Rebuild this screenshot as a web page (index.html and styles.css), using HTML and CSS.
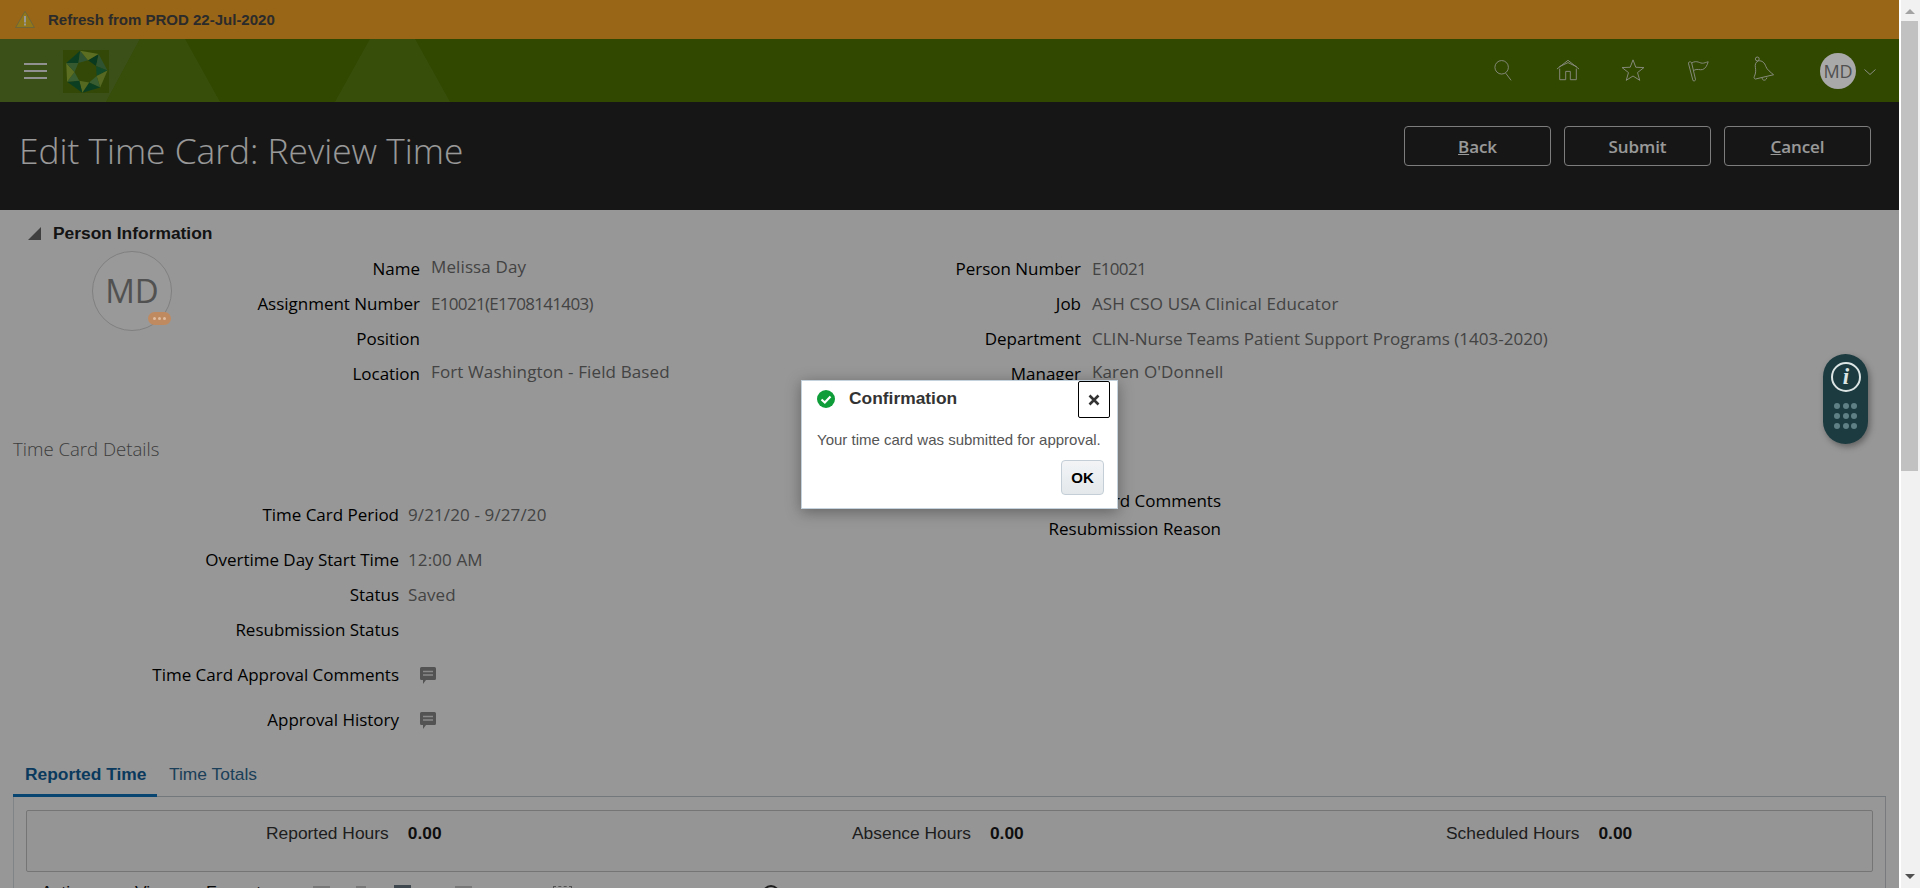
FILE: index.html
```html
<!DOCTYPE html>
<html lang="en">
<head>
<meta charset="utf-8">
<title>Edit Time Card: Review Time</title>
<link rel="stylesheet" href="styles.css">
</head>
<body>
<div class="app">
  <div class="banner">
    <svg class="warn" viewBox="0 0 20 18"><path d="M10 .8 19.400 17H.6Z" fill="#f5c82a" stroke="#b8a860"/><rect x="9" y="5.500" width="2" height="6.500" fill="#fff"/><rect x="9" y="13" width="2" height="2" fill="#fff"/></svg>
    <span class="banner-text">Refresh from PROD 22-Jul-2020</span>
  </div>
  <header class="nav">
    <svg class="nav-bg" viewBox="0 0 700 63" preserveAspectRatio="none"><polygon points="0,0 140,0 106,63 0,63" fill="#63862a"/><polygon points="140,0 185,0 220,63 106,63" fill="#5c8312"/><polygon points="370,0 415,0 450,63 335,63" fill="#5c8312"/></svg>
    <button class="burger"><i></i><i></i><i></i></button>
    <svg class="logo" viewBox="0 0 46 43">
      <rect width="46" height="43" fill="#55780a"/>
      <polygon points="25,10.200 33.100,16 35.600,4" fill="#0f5f33"/>
      <polygon points="35.600,4 44.500,20.400 33.100,16" fill="#4f8a50"/>
      <polygon points="33.100,16 33.600,26 44.500,20.400" fill="#1f7a45"/>
      <polygon points="44.500,20.400 37.200,37.600 33.600,26" fill="#8fae3a"/>
      <polygon points="33.600,26 26.100,32.600 37.200,37.600" fill="#5f9a50"/>
      <polygon points="37.200,37.600 19.300,42.700 26.100,32.600" fill="#14683a"/>
      <polygon points="26.100,32.600 16.300,30.800 19.300,42.700" fill="#8fb038"/>
      <polygon points="19.300,42.700 4.100,31.800 16.300,30.800" fill="#14683a"/>
      <polygon points="16.300,30.800 11.500,22.100 4.100,31.800" fill="#5f9a50"/>
      <polygon points="4.100,31.800 3.200,13.100 11.500,22.100" fill="#9ab83a"/>
      <polygon points="11.500,22.100 15.400,12.900 3.200,13.100" fill="#5a9450"/>
      <polygon points="3.200,13.100 17.200,.8 15.400,12.900" fill="#14683a"/>
      <polygon points="15.400,12.900 25,10.200 17.200,.8" fill="#4f8a50"/>
      <polygon points="17.200,.8 35.600,4 25,10.200" fill="#9ab83a"/>
    </svg>
    <div class="nav-icons">
      <svg class="nav-icon i-search" viewBox="0 0 20 24"><circle cx="8.500" cy="9" r="7.500"/><path d="M13 15.500 19 23.500"/></svg>
      <svg class="nav-icon i-home" viewBox="0 0 26 23"><path d="M1 10.500 13 1l12 9.500M4 10v12h6.500v-9h5v9H22V10M3.500 8 13 3.500 22.500 8"/></svg>
      <svg class="nav-icon i-star" viewBox="0 0 26 25"><path d="M13 1.500 16 9.500l8.800.4-6.900 5.400 2.400 8.400L13 19l-7.300 4.700 2.400-8.400L1.200 9.900 10 9.500Z"/></svg>
      <svg class="nav-icon i-flag" viewBox="0 0 25 25"><path d="M1.500 5 6.500 24c1.500.8 2.800 0 2.800-1L5 4.500c-1-1.500-3.500-.8-3.500.5ZM5 5c6-4 9 1 13 0 2.500-.5 4.500-1.500 5-1.500-1 4-3 7.500-6 8.500-3 1-6-1.500-9.800 1"/></svg>
      <svg class="nav-icon i-bell" viewBox="0 0 23 27"><circle cx="4.500" cy="3" r="2"/><path d="M5.500 5c4.500-.5 6.500 2 8 6 1 3 5 6 8 8.500L2.500 24C1 23.500.8 22.500 1.500 21c1.500-3 1.500-6 1-9-.5-3 0-5.500 3-7ZM9.500 23c.2 3 4.500 3 5-.5"/></svg>
    </div>
    <div class="user">MD</div>
    <svg class="chev" viewBox="0 0 12 6"><path d="M.5.500 6 5.500 11.500.5"/></svg>
  </header>
  <div class="page-head">
    <h1 class="page-title">Edit Time Card: Review Time</h1>
    <div class="actions">
      <button class="act"><u>B</u>ack</button>
      <button class="act">Submit</button>
      <button class="act"><u>C</u>ancel</button>
    </div>
  </div>
  <main class="content">
    <div class="disclosure"><span class="tri"></span><h2 class="sec-title">Person Information</h2></div>
    <section class="person">
      <div class="avatar">MD<span class="badge"><b></b><b></b><b></b></span></div>
      <div class="form form-a">
        <div class="row"><span class="lab">Name</span><span class="val up">Melissa Day</span></div>
        <div class="row"><span class="lab">Assignment Number</span><span class="val num">E10021(E1708141403)</span></div>
        <div class="row"><span class="lab">Position</span><span class="val"></span></div>
        <div class="row"><span class="lab">Location</span><span class="val up">Fort Washington - Field Based</span></div>
      </div>
      <div class="form form-b">
        <div class="row"><span class="lab">Person Number</span><span class="val num">E10021</span></div>
        <div class="row"><span class="lab">Job</span><span class="val">ASH CSO USA Clinical Educator</span></div>
        <div class="row"><span class="lab">Department</span><span class="val snug">CLIN-Nurse Teams Patient Support Programs (1403-2020)</span></div>
        <div class="row"><span class="lab">Manager</span><span class="val up">Karen O'Donnell</span></div>
      </div>
    </section>
    <h3 class="details-title">Time Card Details</h3>
    <section class="details">
      <div class="form form-c">
        <div class="row r-period"><span class="lab">Time Card Period</span><span class="val">9/21/20 - 9/27/20</span></div>
        <div class="row"><span class="lab">Overtime Day Start Time</span><span class="val">12:00 AM</span></div>
        <div class="row"><span class="lab">Status</span><span class="val">Saved</span></div>
        <div class="row r-res"><span class="lab">Resubmission Status</span><span class="val"></span></div>
        <div class="row r-cmt"><span class="lab">Time Card Approval Comments</span><span class="val"><svg class="cmt" viewBox="0 0 16 17"><path d="M1.500 0h13A1.500 1.500 0 0 1 16 1.500v10a1.500 1.500 0 0 1-1.500 1.500H6l-3 4v-4H1.500A1.500 1.500 0 0 1 0 11.500v-10A1.500 1.500 0 0 1 1.500 0Z" fill="#8a8a8a"/><path d="M3 4.500h10M3 8h10" stroke="#e6e6e6" stroke-width="1.500"/></svg></span></div>
        <div class="row r-cmt"><span class="lab">Approval History</span><span class="val"><svg class="cmt" viewBox="0 0 16 17"><path d="M1.500 0h13A1.500 1.500 0 0 1 16 1.500v10a1.500 1.500 0 0 1-1.500 1.500H6l-3 4v-4H1.500A1.500 1.500 0 0 1 0 11.500v-10A1.500 1.500 0 0 1 1.500 0Z" fill="#8a8a8a"/><path d="M3 4.500h10M3 8h10" stroke="#e6e6e6" stroke-width="1.500"/></svg></span></div>
      </div>
      <div class="form form-d">
        <div class="row"><span class="lab">Time Card Comments</span></div>
        <div class="row"><span class="lab">Resubmission Reason</span></div>
      </div>
    </section>
    <nav class="tabs">
      <a class="tab tab-on">Reported Time</a>
      <a class="tab">Time Totals</a>
    </nav>
    <section class="panel">
      <div class="totals">
        <div class="total"><span>Reported Hours</span><b>0.00</b></div>
        <div class="total"><span>Absence Hours</span><b>0.00</b></div>
        <div class="total"><span>Scheduled Hours</span><b>0.00</b></div>
      </div>
      <div class="toolbar">
        <span class="tool t-a">Actions</span>
        <span class="tool t-v">View</span>
        <span class="tool t-f">Format</span>
        <i class="tb-ico ic1"></i><i class="tb-ico ic2"></i><i class="tb-ico ic3"></i><i class="tb-ico ic4"></i><i class="tb-ico ic5"></i><i class="tb-ico ic6"></i><i class="tb-ico ic7"></i>
      </div>
    </section>
  </main>
  <div class="overlay"></div>
  <div class="dialog">
    <div class="dlg-head">
      <svg class="ok-ico" viewBox="0 0 18 18"><circle cx="9" cy="9" r="9" fill="#0f9d3a"/><path d="M4.500 9.500 7.800 12.500 13.500 6.500" fill="none" stroke="#fff" stroke-width="2.200"/></svg>
      <span class="dlg-title">Confirmation</span>
      <button class="dlg-close"><svg viewBox="0 0 12 12"><path d="M1.500 1.500 10.500 10.500M10.500 1.500 1.500 10.500" stroke="#333" stroke-width="2.600"/></svg></button>
    </div>
    <p class="dlg-msg">Your time card was submitted for approval.</p>
    <div class="dlg-foot"><button class="dlg-ok">OK</button></div>
  </div>
  <div class="widget">
    <span class="w-info">i</span>
    <div class="w-dots"><b></b><b></b><b></b><b></b><b></b><b></b><b></b><b></b><b></b></div>
  </div>
</div>
<aside class="scrollbar">
  <span class="arr-up"></span>
  <span class="thumb"></span>
  <span class="arr-down"></span>
</aside>
</body>
</html>
```

FILE: styles.css
```css
* { box-sizing: border-box; }
html, body { margin: 0; height: 888px; overflow: hidden; }
body { display: flex; background: #fff; font-family: "Liberation Sans", Arial, sans-serif; }
button { font: inherit; background: none; padding: 0; }
h1, h2, h3, p { margin: 0; font-weight: normal; }

.app { position: relative; flex: 1; min-width: 0; height: 888px; overflow: hidden; background: #fff; }
.overlay { position: absolute; inset: 0; background: rgba(0, 0, 0, .4); }

.banner { height: 39px; background: #ffa826; display: flex; align-items: center; padding-left: 15px; }
.warn { width: 20px; height: 19px; margin-right: 13px; }
.banner-text { font-size: 15px; font-weight: 700; color: #484848; }

.nav { position: relative; height: 63px; background: #507800; display: flex; align-items: center; }
.nav-bg { position: absolute; left: 0; top: 0; width: 700px; height: 63px; }
.burger { position: relative; width: 23px; height: 16px; margin-left: 24px; border: 0; display: flex; flex-direction: column; justify-content: space-between; }
.burger i { display: block; height: 2px; background: #f2f2f2; }
.logo { position: relative; width: 46px; height: 43px; margin: 1px 0 0 16px; }
.nav-icons { margin-left: auto; display: flex; align-items: center; margin-top: -2px; }
.nav-icon { fill: none; stroke: #e8ecd8; stroke-width: 1; display: block; }
.i-search { width: 18px; height: 22px; margin-right: 44px; }
.i-home { width: 24px; height: 22px; margin-right: 41px; }
.i-star { width: 24px; height: 24px; margin-right: 42px; }
.i-flag { width: 23px; height: 24px; margin-right: 43px; }
.i-bell { width: 22px; height: 26px; margin-right: 45px; margin-top: -1px; }
.user { position: relative; z-index: 1; width: 36px; height: 36px; border-radius: 50%; background: #a9a9a9; color: #505050; font: 18px/36px "Open Sans", sans-serif; text-align: center; }
.chev { width: 12px; height: 6px; margin: 3px 23px 0 8px; fill: none; stroke: #e8ecd8; }

.page-head { height: 108px; background: #252525; display: flex; align-items: flex-start; justify-content: space-between; padding-left: 19px; }
.page-title { font: 300 35.300px/1 "Open Sans", sans-serif; color: #fff; margin-top: 31px; }
.actions { display: flex; gap: 13px; margin: 24px 28px 0 0; }
.act { width: 147px; height: 40px; border: 1px solid #d0d0d0; border-radius: 4px; color: #fff; font: 600 17px "Open Sans", sans-serif; letter-spacing: -.1px; }

.content { height: 678px; color: #000; background: #fcfcfc; }
.disclosure { display: flex; align-items: center; height: 41px; padding: 5px 0 0 28px; }
.tri { width: 0; height: 0; border-style: solid; border-width: 0 0 13px 13px; border-color: transparent transparent #6a6a6a transparent; margin-right: 12px; }
.sec-title { font-size: 17.400px; font-weight: 700; color: #222; }

.person { display: flex; height: 189px; }
.form { font: 17px/1 "Open Sans", sans-serif; }
.row { display: flex; align-items: center; height: 35px; white-space: nowrap; }
.lab { color: #000; flex: none; text-align: right; letter-spacing: -.02px; }
.val { color: #707070; letter-spacing: .12px; }
.val.num { letter-spacing: -.68px; }
.val.snug { letter-spacing: .02px; }
.val.up { position: relative; top: -2px; }
.form-a { width: 650px; }
.form-a .lab { width: 248px; }
.form-a .val { margin-left: 11px; }
.form-b .lab { width: 259px; }
.form-b .val { margin-left: 11px; }

.avatar { position: relative; flex: none; width: 80px; height: 80px; margin-left: 92px; border: 1px solid #d5d5d5; border-radius: 50%; background: #fff; color: #888; font: 33px/78px "Open Sans", sans-serif; text-align: center; }
.badge { position: absolute; z-index: 1; left: 55px; top: 60px; width: 23px; height: 13px; border-radius: 7px; background: #c08a60; display: flex; align-items: center; justify-content: center; gap: 2px; }
.badge b { width: 3px; height: 3px; border-radius: 50%; background: #e0bda0; }

.details-title { font: 300 18.600px/1 "Open Sans", sans-serif; color: #666; margin-left: 13px; height: 25px; }
.details { display: flex; height: 290px; }
.form-c { width: 800px; padding-top: 32px; }
.form-c .lab { width: 399px; }
.form-c .val { margin-left: 9px; }
.r-period { margin-bottom: 10px; }
.r-res { margin-bottom: 5px; }
.form-c .r-cmt { height: 45px; }
.form-c .r-cmt .val { margin-left: 21px; display: flex; }
.cmt { width: 16px; height: 17px; margin-top: 1px; }
.form-d { width: 421px; padding-top: 21px; }
.form-d .row { justify-content: flex-end; height: 28px; }

.tabs { display: flex; margin: 0 13px; height: 42px; border-bottom: 1px solid #c0c8d0; font-size: 17.400px; padding-top: 9px; }
.tab { height: 32px; line-height: 21px; color: #2f6a94; padding-left: 12px; white-space: nowrap; }
.tab-on { width: 144px; height: 33px; font-weight: 700; color: #12619b; border-bottom: 3px solid #0f74bc; }

.panel { margin: 0 13px; padding: 13px 12px 0; border-right: 1px solid #c8ccd0; border-left: 1px solid #d8dcdf; height: 120px; }
.totals { height: 62px; border: 1px solid #c4c4c4; border-radius: 2px; background: #f9f9f9; display: grid; grid-template-columns: 586px 594px 1fr; padding: 12px 0 0 239px; font-size: 17.400px; color: #333; }
.total { display: flex; gap: 19px; white-space: nowrap; line-height: 20px; height: 20px; }
.total b { color: #1a1a1a; }

.toolbar { display: flex; align-items: flex-start; height: 30px; padding-top: 10px; font-size: 17.400px; color: #111; }
.tool { flex: none; }
.t-a { margin-left: 15px; width: 94px; }
.t-v { width: 71px; }
.t-f { width: 107px; }
.tb-ico { flex: none; height: 14px; width: 17px; margin-top: 4px; background: #c8c8c8; }
.ic2 { margin-left: 26px; width: 10px; }
.ic3 { margin: 3px 0 0 28px; background: #6a7784; }
.ic4 { margin-left: 44px; }
.ic5 { margin-left: 81px; width: 19px; background: none; border: 1px dashed #8a8a8a; }
.ic6 { margin: 6px 0 0 112px; width: 6px; background: #a0a0a0; }
.ic7 { margin: 3px 0 0 72px; width: 18px; height: 18px; border-radius: 50%; background: none; border: 2px solid #333; }

.dialog { position: absolute; left: 801px; top: 380px; width: 317px; height: 129px; background: #fff; border: 1px solid #c4d2de; box-shadow: 0 3px 14px rgba(0, 0, 0, .35); }
.dlg-head { display: flex; align-items: flex-start; padding: 9px 6px 0 15px; height: 36px; position: relative; }
.ok-ico { width: 18px; height: 18px; margin-right: 14px; }
.dlg-title { font-size: 17.400px; font-weight: 700; color: #333; line-height: 17px; }
.dlg-close { position: absolute; right: 7px; top: 0; width: 32px; height: 37px; border: 1px solid #000; border-radius: 2px; display: flex; align-items: center; justify-content: center; }
.dlg-close svg { width: 12px; height: 12px; }
.dlg-msg { font-size: 15px; color: #555; padding: 14px 0 0 15px; line-height: 18px; white-space: nowrap; }
.dlg-foot { display: flex; justify-content: flex-end; padding: 11px 13px 0 0; }
.dlg-ok { width: 43px; height: 35px; border: 1px solid #c4ced7; border-radius: 4px; background: linear-gradient(#f2f4f6, #e4e8eb); font-weight: 700; font-size: 15px; color: #000; }

.widget { position: absolute; left: 1823px; top: 354px; width: 45px; height: 90px; border-radius: 23px; background: #1b3b40; box-shadow: 2px 3px 6px rgba(0, 0, 0, .35); }
.w-info { position: absolute; left: 8px; top: 8px; width: 30px; height: 30px; border: 2px solid #dce4e4; border-radius: 50%; color: #dce4e4; font: italic 700 23px/26px "Liberation Serif", serif; text-align: center; }
.w-dots { position: absolute; left: 11px; top: 49px; display: grid; grid-template-columns: repeat(3, 6px); gap: 4px 2.500px; }
.w-dots b { width: 6px; height: 6px; border-radius: 50%; background: #5f8084; }

.scrollbar { width: 21px; height: 888px; background: #f1f1f1; border-left: 2px solid #fff; position: relative; }
.thumb { position: absolute; left: 0; top: 21px; width: 17px; height: 450px; background: #c1c1c1; }
.arr-up, .arr-down { position: absolute; left: 4px; width: 0; height: 0; border-left: 5px solid transparent; border-right: 5px solid transparent; }
.arr-up { top: 9px; border-bottom: 5px solid #a3a3a3; }
.arr-down { top: 874px; border-top: 5px solid #505050; }
```
